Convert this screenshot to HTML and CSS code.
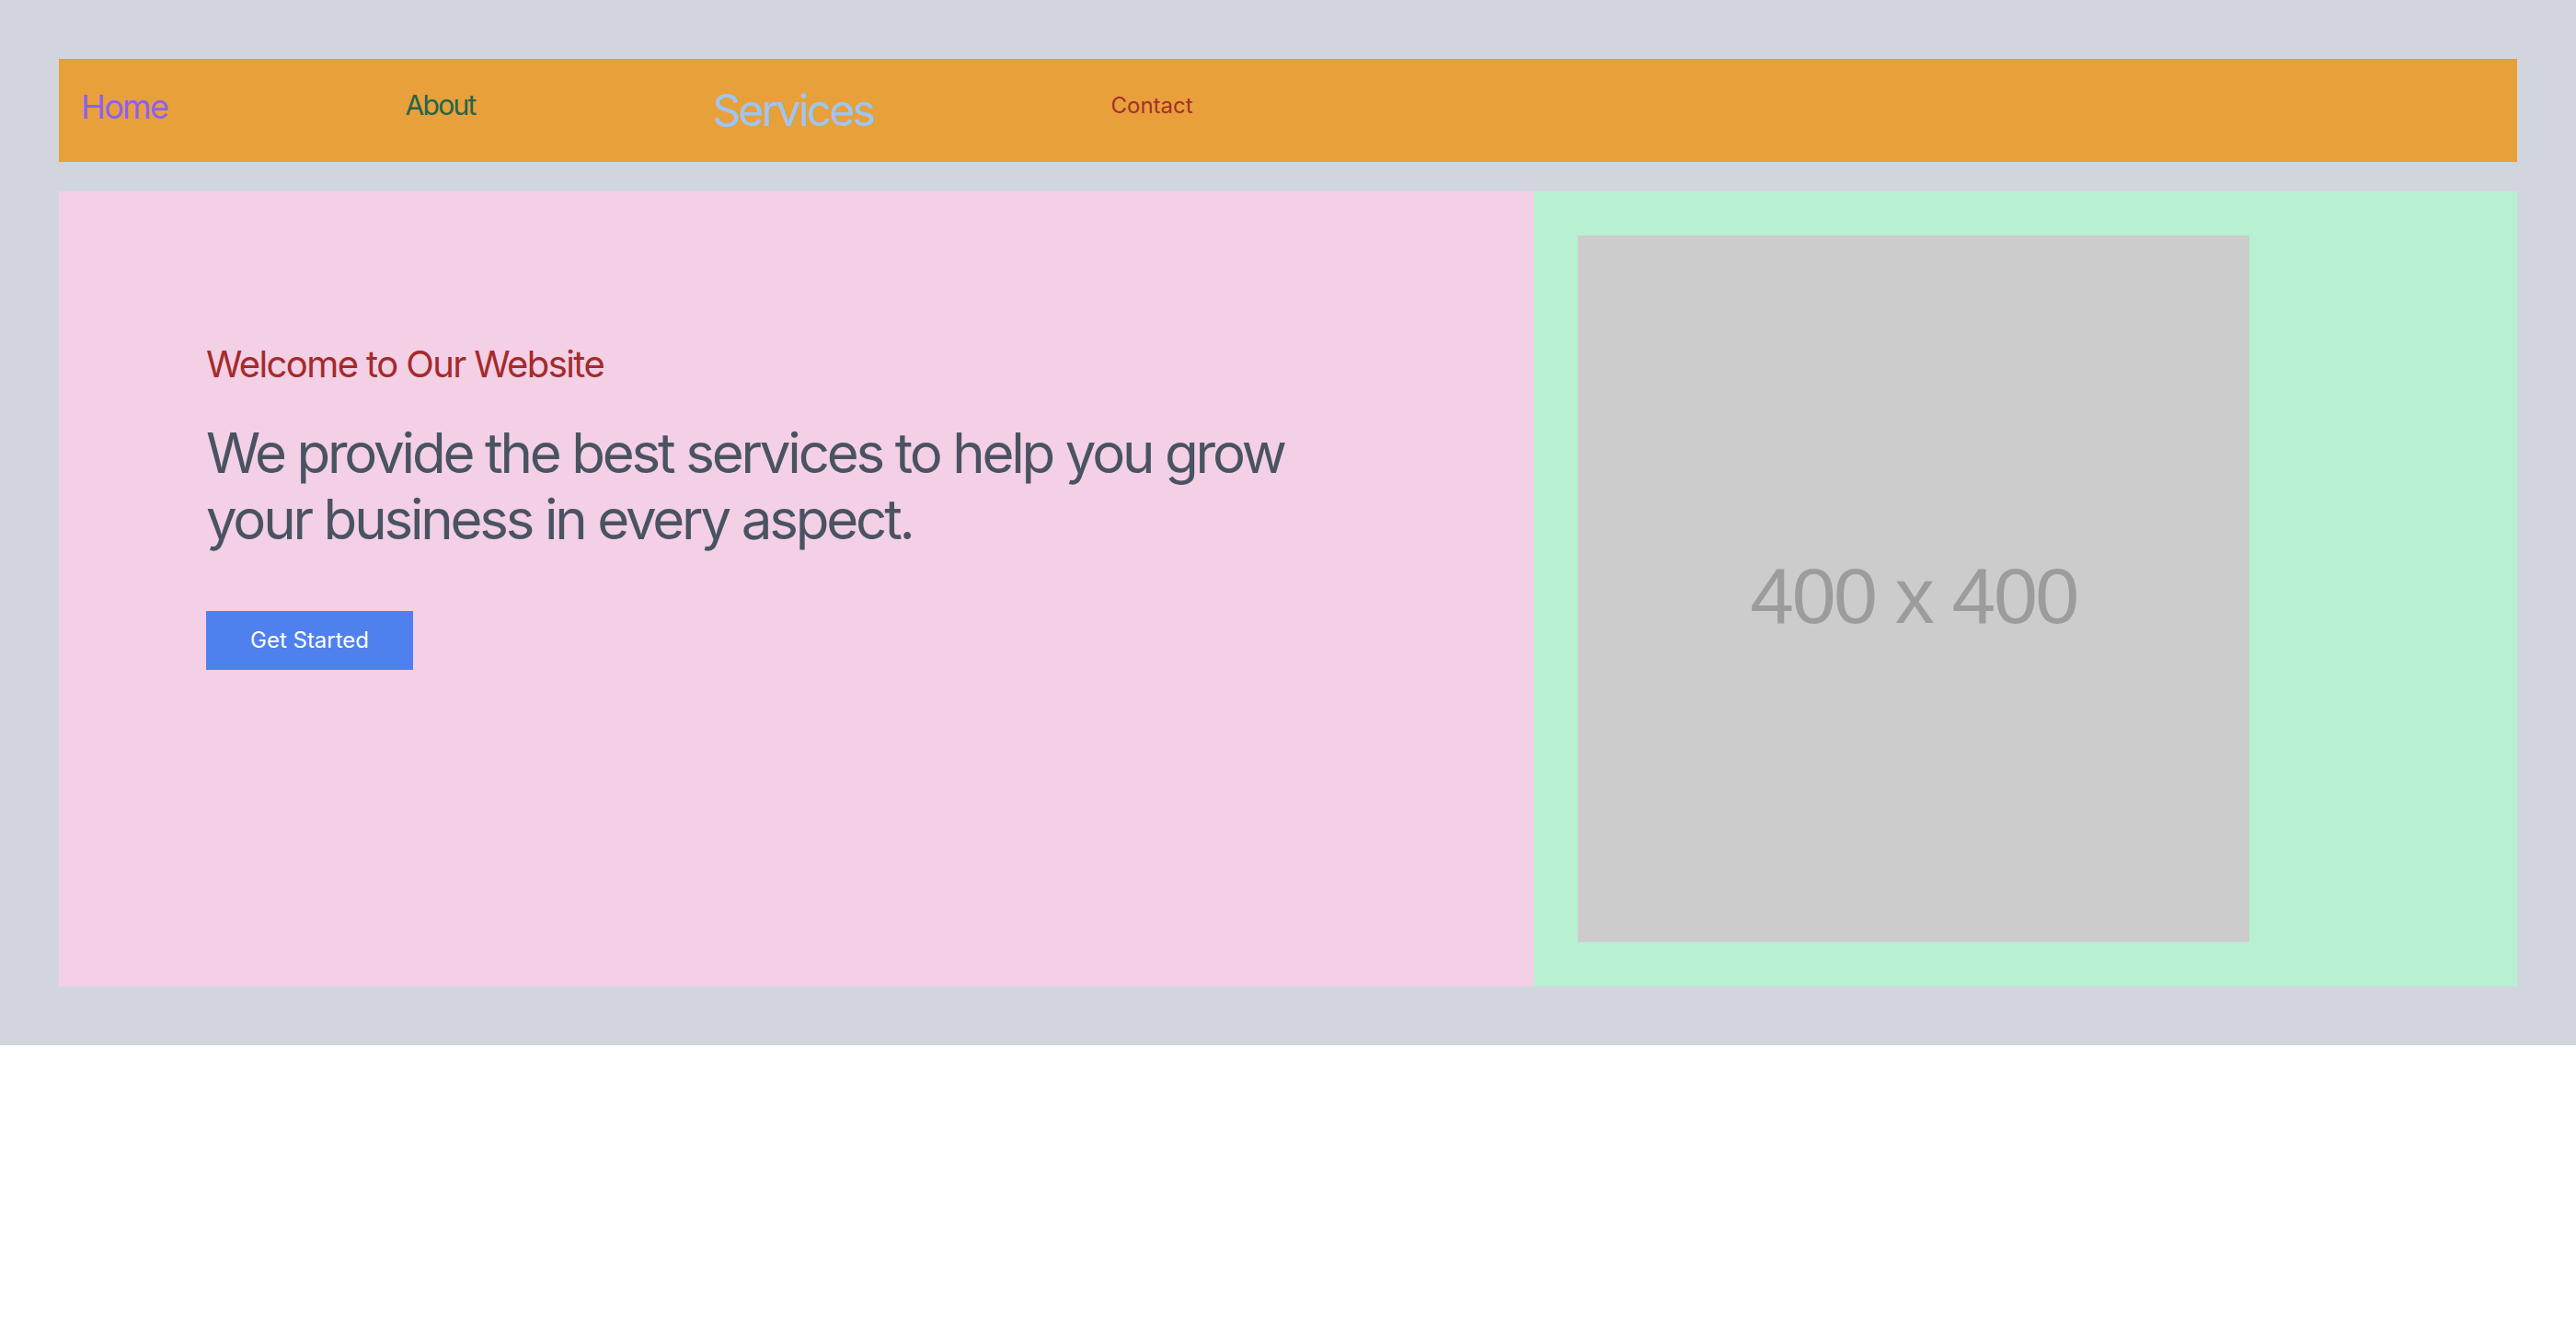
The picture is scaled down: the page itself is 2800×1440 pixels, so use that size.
FILE: index.html
```html
<!DOCTYPE html>
<html lang="en">
<head>
<meta charset="utf-8">
<title>Welcome</title>
<link rel="stylesheet" href="styles.css">
</head>
<body>
<div class="page">
  <nav class="nav">
    <a class="nav-link home" href="#">Home</a>
    <a class="nav-link about" href="#">About</a>
    <a class="nav-link services" href="#">Services</a>
    <a class="nav-link contact" href="#">Contact</a>
  </nav>
  <section class="hero">
    <div class="hero-text">
      <h2 class="welcome">Welcome to Our Website</h2>
      <p class="lead">We provide the best services to help you grow your business in every aspect.</p>
      <a class="cta" href="#">Get Started</a>
    </div>
    <div class="hero-media">
      <div class="placeholder"><span>400 x 400</span></div>
    </div>
  </section>
</div>
</body>
</html>
```
FILE: styles.css
```css
* { box-sizing: border-box; }
html, body { margin: 0; padding: 0; background: #ffffff; }
body { font-family: Inter, "Noto Sans", sans-serif; }

.page {
  background: #d2d5de;
  padding: 64px;
  display: flex;
  flex-direction: column;
  gap: 32px;
}

.nav {
  background: #e8a03a;
  padding: 32px 24px;
  display: flex;
  align-items: flex-start;
  gap: 258px;
}
.nav-link { text-decoration: none; display: block; }
.home { color: #8b60f2; font-size: 36px; line-height: 40px; letter-spacing: -0.045em; }
.about { color: #22654a; font-size: 30px; line-height: 36px; letter-spacing: -0.055em; }
.services { color: #9ec5f0; font-size: 48px; line-height: 48px; letter-spacing: -0.058em; }
.contact { color: #a3302a; font-size: 24px; line-height: 38px; }

.hero {
  display: grid;
  grid-template-columns: 60% 40%;
  height: 864px;
}
.hero-text {
  background: #f3d0e6;
  padding: 164px 160px;
}
.welcome {
  margin: 0;
  font-weight: 400;
  font-size: 40px;
  line-height: 48px;
  letter-spacing: -0.04em;
  color: #a52a2a;
}
.lead {
  margin: 36px 0 0;
  font-size: 60px;
  line-height: 72px;
  letter-spacing: -0.053em;
  color: #4a5361;
}
.cta {
  display: inline-block;
  margin-top: 64px;
  background: #4e81ee;
  color: #ffffff;
  font-size: 24px;
  line-height: 32px;
  padding: 16px 48px;
  text-decoration: none;
}
.hero-media {
  background: #b8f0d2;
  padding: 48px;
}
.placeholder {
  width: 75%;
  height: 100%;
  background: #cccccc;
  display: flex;
  align-items: center;
  justify-content: center;
}
.placeholder span {
  font-family: "Liberation Sans", Arial, sans-serif;
  font-size: 86px;
  letter-spacing: -2.5px;
  color: #9c9c9c;
  padding-top: 14px;
}
```
